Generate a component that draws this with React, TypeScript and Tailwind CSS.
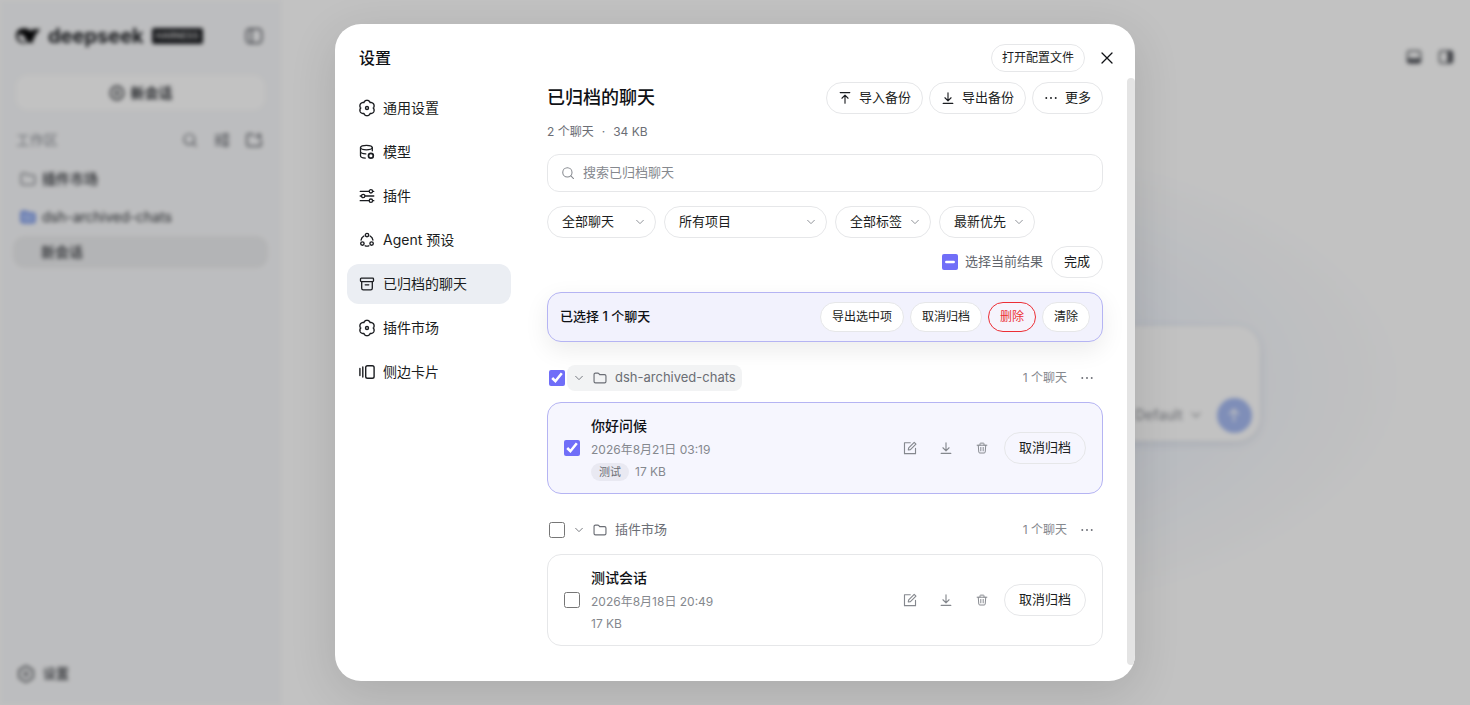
import { useEffect, useRef } from "react";
import type { ReactNode } from "react";

type IconProps = { className?: string };

function Svg({ className = "size-4", width = 1.3, children }: IconProps & { width?: number; children: ReactNode }) {
  return (
    <svg
      viewBox="0 0 16 16"
      fill="none"
      stroke="currentColor"
      strokeWidth={width}
      strokeLinecap="round"
      strokeLinejoin="round"
      aria-hidden="true"
      className={`shrink-0 ${className}`}
    >
      {children}
    </svg>
  );
}

// Six-lobed gear outline, one lobe pointing up.
const gearOutline = Array.from({ length: 120 }, (_, i) => {
  const angle = (i * Math.PI) / 60;
  const radius = 6.2 + 1.5 * Math.pow(Math.abs(Math.cos(3 * angle)), 0.8);
  return `${(9 + radius * Math.sin(angle)).toFixed(2)},${(9 - radius * Math.cos(angle)).toFixed(2)}`;
}).join(" ");

const GearIcon = () => (
  <svg viewBox="0 0 18 18" fill="none" stroke="currentColor" strokeWidth="1.4" strokeLinejoin="round" aria-hidden="true" className="size-[18px] shrink-0">
    <polygon points={gearOutline} />
    <circle cx="9" cy="9" r="1.5" />
  </svg>
);
const DatabaseIcon = () => (
  <Svg>
    <ellipse cx="7.4" cy="3.6" rx="5.9" ry="2.3" />
    <path d="M1.5 3.6v8.2c0 1.2 2 2.2 4.8 2.3M13.3 3.6v3.2M1.5 7.6c0 1.2 2.2 2.2 5.3 2.3" />
    <circle cx="11.900" cy="11.700" r="2.400" strokeWidth="1.700" />
  </Svg>
);
const SlidersIcon = () => (
  <Svg>
    <path d="M1.200 3.300h8.800M13.800 3.300h1M1.200 8h1.200M6.200 8h8.600M1.200 12.700h8.800M13.800 12.700h1" />
    <circle cx="11.900" cy="3.300" r="1.700" />
    <circle cx="4.200" cy="8" r="1.700" />
    <circle cx="11.900" cy="12.700" r="1.700" />
  </Svg>
);
const AgentIcon = () => (
  <Svg width={1.4}>
    <circle cx="8" cy="3.100" r="1.700" />
    <circle cx="3.400" cy="11.600" r="1.700" />
    <circle cx="12.600" cy="11.600" r="1.700" />
    <path d="M4.900 4A5.600 5.600 0 0 0 2.100 8M11.100 4a5.600 5.600 0 0 1 2.800 4M6.200 13.800a5.600 5.600 0 0 0 3.600 0" />
  </Svg>
);
const ArchiveIcon = () => (
  <Svg>
    <rect x="1.500" y="2.200" width="13" height="3.400" rx="0.800" />
    <path d="M2.700 5.800v6.400c0 1 .6 1.600 1.600 1.600h7.400c1 0 1.600-.6 1.600-1.600V5.800M6.200 8.800h3.600" />
  </Svg>
);
const SideCardIcon = () => (
  <Svg width={1.4}>
    <rect x="6.700" y="1.700" width="8.400" height="12.600" rx="1.800" />
    <path d="M.9 4.500v7M3.800 3v10" />
  </Svg>
);
const SearchIcon = ({ className }: IconProps) => (
  <Svg className={className} width={1.2}>
    <circle cx="7.300" cy="7.300" r="5.300" />
    <path d="m11.300 11.300 3 3" />
  </Svg>
);
const ChevronIcon = ({ className = "size-3" }: IconProps) => (
  <Svg className={className} width={1.2}>
    <path d="m3.500 5.700 4.500 4.500 4.500-4.500" />
  </Svg>
);
const UploadIcon = () => (
  <Svg className="size-3.5">
    <path d="M2.500 1.800h11M8 14V5M4.500 8.300 8 4.800l3.500 3.500" />
  </Svg>
);
const DownloadIcon = () => (
  <Svg className="size-3.5">
    <path d="M2.500 14.200h11M8 2v9M4.500 7.700 8 11.200l3.500-3.500" />
  </Svg>
);
const DotsIcon = () => (
  <svg viewBox="0 0 16 16" fill="currentColor" aria-hidden="true" className="size-3.5 shrink-0">
    <circle cx="2.600" cy="8" r="1.100" />
    <circle cx="8" cy="8" r="1.100" />
    <circle cx="13.400" cy="8" r="1.100" />
  </svg>
);
const FolderIcon = ({ className = "size-3.5" }: IconProps) => (
  <Svg className={className}>
    <path d="M1.200 4c0-1 .6-1.600 1.600-1.600h2.700c.5 0 .9.200 1.200.6l.9 1.200h5.600c1 0 1.600.6 1.600 1.600v6.200c0 1-.6 1.600-1.600 1.600H2.800c-1 0-1.600-.6-1.600-1.600z" />
  </Svg>
);
const FolderPlusIcon = () => (
  <Svg width={1.5}>
    <path d="M15 8v4.500c0 1.100-.7 1.800-1.800 1.800H2.800c-1.100 0-1.800-.7-1.800-1.800v-9C1 2.600 1.700 2 2.800 2h2.400c.6 0 1 .2 1.400.7l1 1.300M13 1.500v5M10.500 4h5" />
  </Svg>
);
const EditIcon = () => (
  <Svg className="size-3.5">
    <path d="M8.300 2H1.700v12.500h12.600V8.500" />
    <path d="m6 10.300.5-2.500 6.300-6.300 2 2-6.300 6.300z" />
  </Svg>
);
const TrashIcon = () => (
  <Svg className="size-3">
    <path d="M1.500 4.300h13M5.300 4.300V2.300c0-.5.3-.8.800-.8h3.800c.5 0 .8.300.8.800v2M3 4.300l.7 9c.1.900.6 1.400 1.500 1.400h5.600c.9 0 1.400-.5 1.500-1.400l.7-9M6.400 7.200v4.600M9.600 7.200v4.600" />
  </Svg>
);
const PlusCircleIcon = () => (
  <Svg width={1.6}>
    <circle cx="8" cy="8" r="6.600" />
    <path d="M5.500 8h5M8 5.500v5" />
  </Svg>
);
const PanelIcon = ({ className }: IconProps) => (
  <Svg className={className} width={1.5}>
    <rect x="1.200" y="1.700" width="13.600" height="12.600" rx="3" />
    <path d="M5.800 2v12" />
  </Svg>
);

const pill = "flex shrink-0 items-center justify-center rounded-full border border-[#e6e7e9] whitespace-nowrap";

function Sidebar() {
  return (
    <aside className="flex w-[281px] shrink-0 flex-col bg-[#f8f9fb] text-[#2f3237]">
      <div className="flex items-center pt-6 pr-[18px] pl-4">
        <svg viewBox="0 0 24 18" aria-hidden="true" className="h-[18px] w-6 shrink-0 fill-[#08090b]">
          <path
            d="M0 8.500C0 4 3.500 1.200 8 1.200c2.500 0 4.500.8 6 2.300.7.700 1.500.9 2 .2.500-.8.400-1.700.2-2.700 1.200 1.200 2.300 1.800 3.600 1.500 1.400-.2 2.500-.5 3.900-1.200-.3 3-1.800 4.800-4 5.200-.4 3-1.700 5.700-3.700 7.700.6.600 1.300 1 2 1.300-1.800.8-3.800.6-5.300-.2C6.500 18 0 15.500 0 8.500zm2.200-.2c-.2 4.200 3 7.200 7.300 6.700 1-.1 1.600-.4 2-.8C9 12.500 8.500 7.500 4.500 7.200c-1-.1-2 .2-2.300 1.100z"
            fillRule="evenodd"
          />
        </svg>
        <span className="ml-2 text-xl leading-6 font-bold text-[#1a1c20]">deepseek</span>
        <span className="ml-2 rounded-xs bg-[#1c1e22] px-1 text-[9px] leading-4 font-semibold text-[#d8d8d8]">HARNESS</span>
        <button type="button" aria-label="侧边栏" className="ml-auto text-[#5d6067]">
          <PanelIcon className="size-[18px]" />
        </button>
      </div>
      <button type="button" className="mx-4 mt-[27px] flex h-[35px] items-center justify-center gap-1.5 rounded-xl bg-white text-sm font-semibold">
        <PlusCircleIcon />
        新会话
      </button>
      <div className="mt-[17px] flex h-[26px] items-center gap-4 pr-[19px] pl-4 text-[#5d6067]">
        <h2 className="mr-auto text-sm text-[#888b92]">工作区</h2>
        <SearchIcon />
        <SlidersIcon />
        <FolderPlusIcon />
      </div>
      <div className="mt-[11px] flex h-[30px] items-center gap-1.5 pl-5 text-sm font-medium">
        <FolderIcon className="size-4 text-[#777a80]" />
        插件市场
      </div>
      <div className="mt-2 flex h-[30px] items-center gap-1.5 pl-5 text-sm">
        <FolderIcon className="size-4 fill-[#a9bff5] text-[#4a70df]" />
        dsh-archived-chats
      </div>
      <a href="#chat" className="mx-[13px] mt-1 flex h-8 items-center rounded-xl bg-[#ecedef] pl-7 text-sm font-medium">新会话</a>
      <button type="button" className="mt-auto mb-4 flex h-[30px] items-center gap-2 pl-[17px] text-[13px] font-medium">
        <GearIcon />
        设置
      </button>
    </aside>
  );
}

function Workspace() {
  return (
    <main className="flex flex-1 flex-col bg-white bg-[radial-gradient(ellipse_530px_250px_at_50%_54%,#e6edff_0%,#eef3fc_45%,#ffffff_100%)] px-4 pb-1">
      <div className="flex justify-end gap-4 pt-[49px] text-[#53565c]">
        <Svg width={1.5}>
          <rect x="1.500" y="2" width="13" height="12" rx="2.500" />
          <path d="M2 10h12v3H2z" fill="currentColor" />
        </Svg>
        <Svg width={1.5}>
          <rect x="1.500" y="2" width="13" height="12" rx="2.500" />
          <path d="M10 3h3.500v10H10z" fill="currentColor" />
        </Svg>
      </div>
      <div className="mx-auto my-auto w-full max-w-[768px] rounded-3xl bg-white p-2 shadow-[0_2px_10px_rgba(30,50,90,0.12)]">
        <div className="h-16" />
        <div className="flex items-center justify-end gap-3.5 text-sm text-[#8a8d94]">
          <span className="flex items-center gap-1.5">
            Default
            <ChevronIcon className="size-3.5" />
          </span>
          <span className="flex size-[35px] items-center justify-center rounded-full bg-[#a7bbf2] text-white">
            <Svg width={1.6}>
              <path d="M8 14V2.500M3.500 7 8 2.500 12.500 7" />
            </Svg>
          </span>
        </div>
      </div>
    </main>
  );
}

const navItems = [
  { label: "通用设置", icon: <GearIcon /> },
  { label: "模型", icon: <DatabaseIcon /> },
  { label: "插件", icon: <SlidersIcon /> },
  { label: "Agent 预设", icon: <AgentIcon /> },
  { label: "已归档的聊天", icon: <ArchiveIcon />, active: true },
  { label: "插件市场", icon: <GearIcon /> },
  { label: "侧边卡片", icon: <SideCardIcon /> },
];

function SettingsNav() {
  return (
    <nav aria-label="设置" className="flex w-[164px] shrink-0 flex-col gap-1 pt-2.5">
      {navItems.map((item) => (
        <button
          key={item.label}
          type="button"
          className={`flex h-10 items-center gap-[7px] rounded-xl pl-[11px] text-sm text-[#1b1d21] ${item.active ? "bg-[#ebeef3]" : ""}`}
        >
          <span className="flex w-[18px] justify-center">{item.icon}</span>
          {item.label}
        </button>
      ))}
    </nav>
  );
}

function Filter({ label, value, className }: { label: string; value: string; className: string }) {
  return (
    <div className={`grid items-center ${className}`}>
      <select
        aria-label={label}
        className="col-start-1 row-start-1 h-8 w-full appearance-none rounded-full border border-[#e6e7e9] bg-white px-3.5 text-[13px] text-[#1b1d21]"
      >
        <option>{value}</option>
      </select>
      <span className="pointer-events-none col-start-1 row-start-1 mr-2.5 justify-self-end text-[#85888e]">
        <ChevronIcon />
      </span>
    </div>
  );
}

const checkboxClass = "m-0 size-4 shrink-0 accent-[#706ef8]";

function SelectAll() {
  const ref = useRef<HTMLInputElement>(null);
  useEffect(() => {
    if (ref.current) ref.current.indeterminate = true;
  }, []);
  return (
    <label className="flex items-center gap-[7px] text-[13px] text-[#62656c]">
      <input ref={ref} type="checkbox" className={checkboxClass} />
      选择当前结果
    </label>
  );
}

type Chat = { project: string; title: string; date: string; size: string; tag?: string; selected: boolean };

const chats: Chat[] = [
  { project: "dsh-archived-chats", title: "你好问候", date: "2026年8月21日 03:19", size: "17 KB", tag: "测试", selected: true },
  { project: "插件市场", title: "测试会话", date: "2026年8月18日 20:49", size: "17 KB", selected: false },
];

function ChatGroup({ chat }: { chat: Chat }) {
  return (
    <section className="mt-[23px]">
      <div className="flex h-[26px] items-center pr-1 pl-0.5">
        <input type="checkbox" aria-label={chat.project} defaultChecked={chat.selected} className={checkboxClass} />
        <button
          type="button"
          className={`ml-0.5 flex h-full items-center rounded-lg px-1.5 text-[13px] text-[#6b6e75] ${chat.selected ? "bg-[#f2f3f4]" : ""}`}
        >
          <ChevronIcon />
          <FolderIcon className="mx-2 size-3.5" />
          {chat.project}
        </button>
        <span className="mr-2 ml-auto text-xs text-[#85888e]">1 个聊天</span>
        <button type="button" aria-label="更多" className="flex size-6 items-center justify-center text-[#6b6e75]">
          <DotsIcon />
        </button>
      </div>
      <article
        className={`mt-[11px] flex min-h-[92px] items-center rounded-[14px] border px-4 ${chat.selected ? "border-[#b5b4f3] bg-[#f6f6fe]" : "border-[#e6e7e9] bg-white"}`}
      >
        <input type="checkbox" aria-label={chat.title} defaultChecked={chat.selected} className={checkboxClass} />
        <div className="ml-[11px] flex-1">
          <h3 className="text-sm leading-6 font-medium text-[#0f1115]">{chat.title}</h3>
          <p className="text-xs leading-6 text-[#85888e]">{chat.date}</p>
          <p className="flex items-center gap-1.5 text-xs leading-5 text-[#85888e]">
            {chat.tag && <span className="rounded-full bg-[#e9e9f2] px-2 text-[11px] leading-[18px] text-[#6b6e75]">{chat.tag}</span>}
            {chat.size}
          </p>
        </div>
        <div className="flex items-center gap-2 text-[#85888e]">
          <button type="button" aria-label="编辑" className="flex size-7 items-center justify-center">
            <EditIcon />
          </button>
          <button type="button" aria-label="导出" className="flex size-7 items-center justify-center">
            <DownloadIcon />
          </button>
          <button type="button" aria-label="删除" className="flex size-7 items-center justify-center">
            <TrashIcon />
          </button>
          <button type="button" className={`${pill} h-8 px-3.5 text-[13px] text-[#1b1d21]`}>
            取消归档
          </button>
        </div>
      </article>
    </section>
  );
}

function ArchivedChats() {
  return (
    <div className="min-w-0 flex-1 pt-1 pr-6 pl-9">
      <div className="flex items-center gap-1.5 text-[13px] text-[#1b1d21]">
        <h2 className="mr-auto text-lg font-medium text-[#0f1115]">已归档的聊天</h2>
        <button type="button" className={`${pill} h-8 gap-[7px] px-[11px]`}>
          <UploadIcon />
          导入备份
        </button>
        <button type="button" className={`${pill} h-8 gap-[7px] px-[11px]`}>
          <DownloadIcon />
          导出备份
        </button>
        <button type="button" className={`${pill} h-8 gap-[7px] px-[11px]`}>
          <DotsIcon />
          更多
        </button>
      </div>
      <p className="mt-2 flex gap-2 text-xs leading-5 text-[#6b6e75]">
        <span>2 个聊天</span>
        <span>·</span>
        <span>34 KB</span>
      </p>
      <label className="mt-3 flex h-[38px] items-center gap-2 rounded-xl border border-[#e6e7e9] px-[13px] text-[#85888e]">
        <SearchIcon className="size-3.5" />
        <input
          type="search"
          aria-label="搜索已归档聊天"
          placeholder="搜索已归档聊天"
          className="min-w-0 flex-1 bg-transparent text-[13px] outline-none placeholder:text-[#85888e]"
        />
      </label>
      <div className="mt-3.5 flex flex-wrap gap-2">
        <Filter label="聊天" value="全部聊天" className="w-[109px]" />
        <Filter label="项目" value="所有项目" className="w-[163px]" />
        <Filter label="标签" value="全部标签" className="w-24" />
        <Filter label="排序" value="最新优先" className="w-24" />
        <div className="ml-auto flex items-center gap-2">
          <SelectAll />
          <button type="button" className={`${pill} h-8 px-3 text-[13px] text-[#1b1d21]`}>
            完成
          </button>
        </div>
      </div>
      <div className="mt-3.5 flex h-[50px] items-center gap-1.5 rounded-[14px] border border-[#b5b4f3] bg-[#f2f2fd] px-3 text-xs text-[#1b1d21] shadow-[0_8px_24px_rgba(0,0,0,0.08)]">
        <strong className="mr-auto text-[13px] font-medium text-[#0f1115]">已选择 1 个聊天</strong>
        <button type="button" className={`${pill} h-[30px] bg-white px-[11px]`}>
          导出选中项
        </button>
        <button type="button" className={`${pill} h-[30px] bg-white px-[11px]`}>
          取消归档
        </button>
        <button type="button" className="flex h-[30px] items-center rounded-full border border-[#ec2f35] bg-[#f6f4fc] px-[11px] text-[#ec2f35]">
          删除
        </button>
        <button type="button" className={`${pill} h-[30px] bg-white px-[11px]`}>
          清除
        </button>
      </div>
      {chats.map((chat) => (
        <ChatGroup key={chat.title} chat={chat} />
      ))}
    </div>
  );
}

export default function App() {
  return (
    <div className="relative h-screen overflow-hidden bg-white font-['Inter','Noto_Sans_CJK_SC',sans-serif]">
      <div className="flex h-full blur-[2px]" aria-hidden="true">
        <Sidebar />
        <Workspace />
      </div>
      <div className="absolute inset-0 flex justify-center bg-black/24 py-6">
        <div
          role="dialog"
          aria-modal="true"
          aria-labelledby="settings-title"
          className="flex w-full max-w-[800px] flex-col overflow-hidden rounded-[26px] bg-white shadow-[0_12px_48px_rgba(0,0,0,0.12)]"
        >
          <header className="flex items-center pt-5 pr-5 pb-1.5 pl-6">
            <h1 id="settings-title" className="mr-auto text-base font-medium text-[#0f1115]">设置</h1>
            <button type="button" className={`${pill} h-7 px-2.5 text-xs text-[#1b1d21]`}>
              打开配置文件
            </button>
            <button type="button" aria-label="关闭" className="ml-3.5 flex w-4 justify-center text-[#0f1115]">
              <Svg>
                <path d="m3 3 10 10M13 3 3 13" />
              </Svg>
            </button>
          </header>
          <div className="flex min-h-0 flex-1 pl-3">
            <SettingsNav />
            <ArchivedChats />
            <div aria-hidden="true" className="mb-4 w-2 shrink-0 rounded-full bg-[#e4e4e4]" />
          </div>
        </div>
      </div>
    </div>
  );
}
